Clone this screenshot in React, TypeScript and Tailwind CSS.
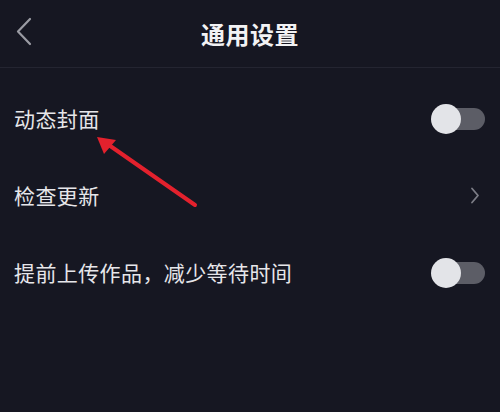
import React, { useState } from "react";

function Toggle({ on = false }: { on?: boolean }) {
  return (
    <div className="relative h-[30px] w-[54px] shrink-0">
      <div className="absolute right-0 top-[4px] h-[22px] w-[40px] rounded-full bg-[#5c5d66]" />
      <div
        className={
          "absolute top-0 h-[30px] w-[30px] rounded-full bg-[#e3e4e8] " +
          (on ? "right-0" : "left-0")
        }
      />
    </div>
  );
}

function Row({ label, right }: { label: string; right: React.ReactNode }) {
  return (
    <div className="flex h-[77px] items-center justify-between pl-[14px] pr-[15px]">
      <span className="text-[21px] leading-none tracking-[0.4px] text-[#e6e6ea]">{label}</span>
      {right}
    </div>
  );
}

export default function App() {
  const [dynamicCover] = useState(false);
  const [preUpload] = useState(false);

  return (
    <div
      className="relative h-[412px] w-[500px] overflow-hidden bg-[#161722]"
      style={{ fontFamily: '"Noto Sans CJK SC", "Noto Sans", sans-serif' }}
    >
      {/* 顶部导航 */}
      <div className="relative flex h-[67px] items-center justify-center">
        <svg
          className="absolute left-[14px] top-[17px]"
          width="20"
          height="30"
          viewBox="0 0 20 30"
          fill="none"
        >
          <path d="M16 2 L4 14.5 L16 27" stroke="#9a9ba3" strokeWidth="2.2" strokeLinecap="round" strokeLinejoin="round" />
        </svg>
        <h1 className="text-[24px] font-bold tracking-[0.5px] text-[#f2f2f4]">通用设置</h1>
      </div>
      <div className="h-px bg-[#242531]" />

      <div className="pt-[12px]">
        <Row label="动态封面" right={<Toggle on={dynamicCover} />} />
        <Row
          label="检查更新"
          right={
            <svg width="10" height="17" viewBox="0 0 10 17" fill="none" className="mr-[5px]">
              <path d="M2 1.5 L8 8.5 L2 15.5" stroke="#7c7d86" strokeWidth="1.8" strokeLinecap="round" strokeLinejoin="round" />
            </svg>
          }
        />
        <Row label="提前上传作品，减少等待时间" right={<Toggle on={preUpload} />} />
      </div>

      {/* 红色标注箭头 */}
      <svg className="pointer-events-none absolute left-0 top-0" width="500" height="412">
        <line x1="195" y1="205" x2="106" y2="143" stroke="#e3212d" strokeWidth="4" strokeLinecap="round" />
        <polygon points="97,137 116,140 104,154" fill="#e3212d" />
      </svg>
    </div>
  );
}
